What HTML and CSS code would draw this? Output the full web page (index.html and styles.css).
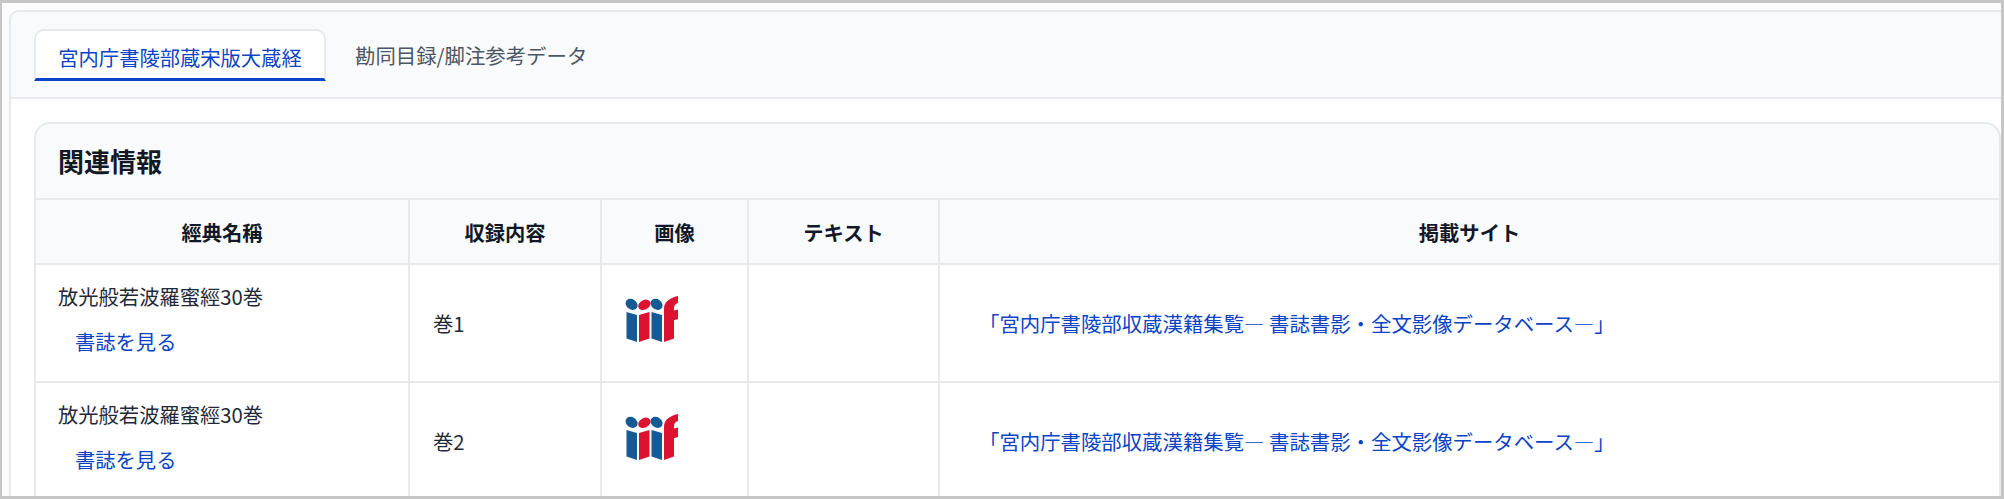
FILE: index.html
```html
<!DOCTYPE html>
<html lang="ja">
<head>
<meta charset="utf-8">
<title>関連情報</title>
<link rel="stylesheet" href="styles.css">
</head>
<body>
<svg class="defs" width="0" height="0" aria-hidden="true">
  <symbol id="iiif" viewBox="0 0 53 46">
    <ellipse cx="6.6" cy="8.4" rx="6.4" ry="5.1" transform="rotate(35 6.6 8.4)" fill="#155a93"/>
    <ellipse cx="19.4" cy="8.8" rx="6.6" ry="4.7" transform="rotate(-28 19.4 8.8)" fill="#dd1230"/>
    <ellipse cx="31.6" cy="8.4" rx="6.4" ry="5.1" transform="rotate(35 31.6 8.4)" fill="#155a93"/>
    <path d="M1.5 16 L12 19 V46 L1.5 42.6 Z" fill="#155a93"/>
    <path d="M14 19 L24.5 16 V42.6 L14 46 Z" fill="#dd1230"/>
    <path d="M26.5 16 L37 19 V46 L26.5 42.6 Z" fill="#155a93"/>
    <path d="M39 46 V13 C39 6 44 2 53 0 V7 C49.5 8 49 10 49 14.5 L53 13.5 V23 L49 24.2 V42.5 Z" fill="#dd1230"/>
  </symbol>
</svg>
<div class="frame">
  <div class="panel">
    <nav class="tabbar">
      <a class="tab tab-active">宮内庁書陵部蔵宋版大蔵経</a>
      <a class="tab">勘同目録/脚注参考データ</a>
    </nav>
    <section class="content">
      <div class="card">
        <h2 class="card-title">関連情報</h2>
        <table class="info">
          <colgroup>
            <col class="c1"><col class="c2"><col class="c3"><col class="c4"><col class="c5">
          </colgroup>
          <thead>
            <tr><th>經典名稱</th><th>収録内容</th><th>画像</th><th>テキスト</th><th>掲載サイト</th></tr>
          </thead>
          <tbody>
            <tr>
              <td class="name">
                <div>放光般若波羅蜜經30巻</div>
                <a class="biblio">書誌を見る</a>
              </td>
              <td class="vol">巻1</td>
              <td class="img"><svg class="logo"><use href="#iiif"/></svg></td>
              <td></td>
              <td class="site"><a>「宮内庁書陵部収蔵漢籍集覧― 書誌書影・全文影像データベース―」</a></td>
            </tr>
            <tr>
              <td class="name">
                <div>放光般若波羅蜜經30巻</div>
                <a class="biblio">書誌を見る</a>
              </td>
              <td class="vol">巻2</td>
              <td class="img"><svg class="logo"><use href="#iiif"/></svg></td>
              <td></td>
              <td class="site"><a>「宮内庁書陵部収蔵漢籍集覧― 書誌書影・全文影像データベース―」</a></td>
            </tr>
          </tbody>
        </table>
      </div>
    </section>
  </div>
</div>
</body>
</html>
```

FILE: styles.css
```css
* { box-sizing: border-box; }
html, body { margin: 0; padding: 0; background: #fff; }
body {
  width: 2004px;
  height: 499px;
  overflow: hidden;
  font-family: "Noto Sans CJK JP", "Noto Sans", sans-serif;
  color: #1f2937;
}
.defs { display: block; height: 0; }
.frame {
  width: 2004px;
  height: 499px;
  border: solid #c6c6c6;
  border-width: 3px 3px 3px 2px;
  padding: 7px 0 0 7px;
  background: #fbfbfc;
  overflow: hidden;
}
.panel {
  height: 520px;
  background: #fff;
  border: 2px solid #e8e9ed;
  border-right: 0;
  border-radius: 10px 0 0 0;
}
.tabbar {
  display: flex;
  height: 87px;
  padding: 17px 0 0 23px;
  background: #f9fafb;
  border-bottom: 2px solid #e8e9ed;
  border-radius: 9px 0 0 0;
}
.tab {
  height: 52px;
  padding: 0 29px;
  font-size: 20.4px;
  line-height: 52px;
  color: #4b5563;
}
.tab-active {
  width: 292px;
  padding: 0;
  font-size: 20.3px;
  text-align: center;
  color: #0b43c6;
  background: #fff;
  border: 2px solid #e8e9ed;
  border-bottom: 3px solid #0b43c6;
  border-radius: 10px 10px 0 0;
}
.content { padding: 23px 0 0 23px; }
.card {
  width: 1967px;
  border: 2px solid #e8e9ed;
  border-bottom: 0;
  border-radius: 16px 16px 0 0;
  background: #f9fafb;
  overflow: hidden;
}
.card-title {
  height: 76px;
  margin: 0;
  padding-left: 22px;
  font-size: 26px;
  font-weight: 700;
  line-height: 74px;
  color: #111827;
  border-bottom: 2px solid #e8e9ed;
}
.info {
  width: 100%;
  table-layout: fixed;
  border-collapse: collapse;
  background: #fff;
}
.c1 { width: 373px; }
.c2 { width: 192px; }
.c3 { width: 147px; }
.c4 { width: 191px; }
.info th {
  height: 64px;
  padding: 0;
  font-size: 20.3px;
  font-weight: 700;
  color: #111827;
  background: #f9fafb;
  border-left: 2px solid #e8e9ed;
  border-bottom: 2px solid #e8e9ed;
}
.info td {
  height: 118px;
  padding: 0;
  font-size: 20.3px;
  line-height: 30px;
  vertical-align: middle;
  border-left: 2px solid #e8e9ed;
  border-bottom: 2px solid #e8e9ed;
}
.info th:first-child, .info td:first-child { border-left: 0; }
.info .name { padding: 0 0 10px 22px; }
.biblio {
  display: block;
  margin: 15px 0 0 17px;
  color: #0b43c6;
}
.info .vol { padding-left: 23px; }
.info .img { padding-left: 23px; }
.logo { display: block; width: 53px; height: 46px; margin-top: -8px; }
.info .site { padding-left: 39px; }
.site a { color: #0b43c6; font-size: 20.4px; }
```
